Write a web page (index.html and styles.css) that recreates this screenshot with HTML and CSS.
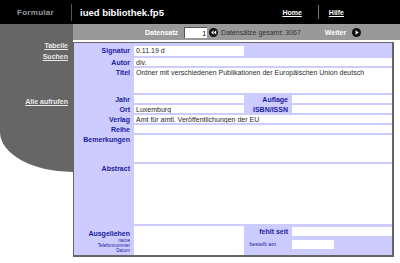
FILE: index.html
```html
<!DOCTYPE html>
<html lang="de">
<head>
    <meta charset="UTF-8">
    <title>iued bibliothek.fp5</title>
    <link rel="stylesheet" href="styles.css">
</head>
<body>
    <div class="top">
        <div class="brand">Formular</div>
        <div class="title">iued bibliothek.fp5</div>
        <nav class="topnav">
            <a href="#">Home</a>
            <span class="sep"></span>
            <a href="#">Hilfe</a>
        </nav>
    </div>

    <div class="page">
        <aside class="side">
            <a href="#">Tabelle</a>
            <a href="#">Suchen</a>
            <a href="#" class="all">Alle aufrufen</a>
        </aside>

        <main class="main">
            <!-- record navigation -->
            <div class="recbar">
                <span class="rec-label">Datensatz</span>
                <span class="rec-input">1</span>
                <svg class="ico" width="9" height="9" viewBox="0 0 10 10"><circle cx="5" cy="5" r="5" fill="#111"/><path d="M5 2.6 2.4 5 5 7.4Z M8 2.6 5.4 5 8 7.4Z" fill="#fff"/></svg>
                <span class="rec-total">Datensätze gesamt: 3067</span>
                <span class="rec-next">Weiter</span>
                <svg class="ico" width="9" height="9" viewBox="0 0 10 10"><circle cx="5" cy="5" r="5" fill="#111"/><path d="M4 2.6 7.4 5 4 7.4Z" fill="#fff"/></svg>
            </div>

            <!-- record form -->
            <div class="form">
                <div class="lbl">Signatur</div>
                <div class="val">0.11.19 d</div>
                <div class="pad span2"></div>

                <div class="lbl">Autor</div>
                <div class="val span3">div.</div>

                <div class="lbl">Titel</div>
                <div class="val span3">Ordner mit verschiedenen Publikationen der Europäischen Union deutsch</div>

                <div class="lbl">Jahr</div>
                <div class="val"></div>
                <div class="lbl">Auflage</div>
                <div class="val"></div>

                <div class="lbl">Ort</div>
                <div class="val">Luxemburg</div>
                <div class="lbl">ISBN/ISSN</div>
                <div class="val"></div>

                <div class="lbl">Verlag</div>
                <div class="val span3">Amt für amtl. Veröffentlichungen der EU</div>

                <div class="lbl">Reihe</div>
                <div class="val span3"></div>

                <div class="lbl">Bemerkungen</div>
                <div class="val span3"></div>

                <div class="lbl">Abstract</div>
                <div class="val span3"></div>

                <div class="lbl lend">
                    Ausgeliehen
                    <small>name</small>
                    <small>Telefonnummer</small>
                    <small>Datum</small>
                </div>
                <div class="val"></div>
                <div class="loan span2">
                    <div class="lbl">fehlt seit</div>
                    <div class="val"></div>
                    <div class="lbl thin">bestellt am</div>
                    <div class="val short"></div>
                </div>
            </div>
        </main>
    </div>
</body>
</html>
```

FILE: styles.css
```css
body {
    margin: 0;
    background: #fff;
    font-family: 'Liberation Sans', Arial, sans-serif;
}
a {
    color: #fff;
    font-weight: bold;
}

/* header */
.top {
    display: flex;
    align-items: center;
    height: 24px;
    background: #000;
}
.brand {
    width: 72px;
    text-align: center;
    color: #9a9a9a;
    font-size: 8px;
    font-weight: bold;
    letter-spacing: 0.3px;
    border-right: 1px solid #555;
    line-height: 17px;
    box-sizing: border-box;
}
.title {
    margin-left: 8px;
    color: #fff;
    font-size: 9.5px;
    font-weight: bold;
}
.topnav {
    display: flex;
    align-items: center;
    margin-left: auto;
    margin-right: 56px;
    font-size: 7px;
}
.topnav .sep {
    width: 1px;
    height: 14px;
    margin: 0 10px 0 16px;
    background: #777;
}

/* page */
.page {
    display: flex;
}
.side {
    display: flex;
    flex-direction: column;
    align-items: flex-end;
    width: 73px;
    height: 148px;
    padding: 16px 5px 0 0;
    box-sizing: border-box;
    background: #666;
    border-bottom-left-radius: 73px 40px;
    font-size: 7px;
}
.side a {
    color: #e8e8e8;
    line-height: 11px;
}
.side a.all {
    margin-top: 34px;
}
.main {
    flex: 1;
}

/* record bar */
.recbar {
    display: flex;
    align-items: center;
    height: 16px;
    padding-left: 72px;
    background: #999;
    font-size: 7px;
}
.rec-label,
.rec-next {
    color: #fff;
    font-weight: bold;
}
.rec-input {
    width: 21px;
    height: 10px;
    margin-left: 6px;
    padding-right: 1px;
    background: #fff;
    border-top: 1px solid #555;
    border-left: 1px solid #555;
    text-align: right;
    line-height: 11px;
    color: #000;
}
.ico {
    margin-left: 2px;
}
.rec-total {
    margin-left: 3px;
    color: #333;
}
.rec-next {
    margin-left: 24px;
    margin-right: 4px;
}

/* form */
.form {
    display: grid;
    grid-template-columns: 58px 110px 44px 100px;
    grid-template-rows: 10px 8px 25px 8px 8px 8px 8px 27px 60px 29px;
    gap: 2px;
    width: 318px;
    margin-top: 2px;
    padding-top: 3px;
    background: #ccf;
    border: 1px solid #666;
    border-width: 1px 2px 2px 1px;
    font-size: 7px;
}
.lbl {
    padding-right: 2px;
    text-align: right;
    color: #1c1c9c;
    font-weight: bold;
    line-height: 9px;
}
.val {
    padding-left: 2px;
    background: #fff;
    color: #2a2a2a;
    line-height: 9px;
    overflow: hidden;
}
.span2 {
    grid-column: span 2;
}
.span3 {
    grid-column: span 3;
}
.lend {
    display: flex;
    flex-direction: column;
    align-items: flex-end;
    padding-top: 3px;
}
.lend small {
    font-size: 4.7px;
    font-weight: normal;
    line-height: 5px;
}
.loan {
    display: grid;
    grid-template-columns: 44px 100px;
    grid-template-rows: 9px 9px;
    gap: 4px 2px;
    padding-top: 1px;
}
.lbl.thin {
    padding-right: 14px;
    font-size: 5.5px;
    font-weight: normal;
}
.val.short {
    width: 40px;
}
```
